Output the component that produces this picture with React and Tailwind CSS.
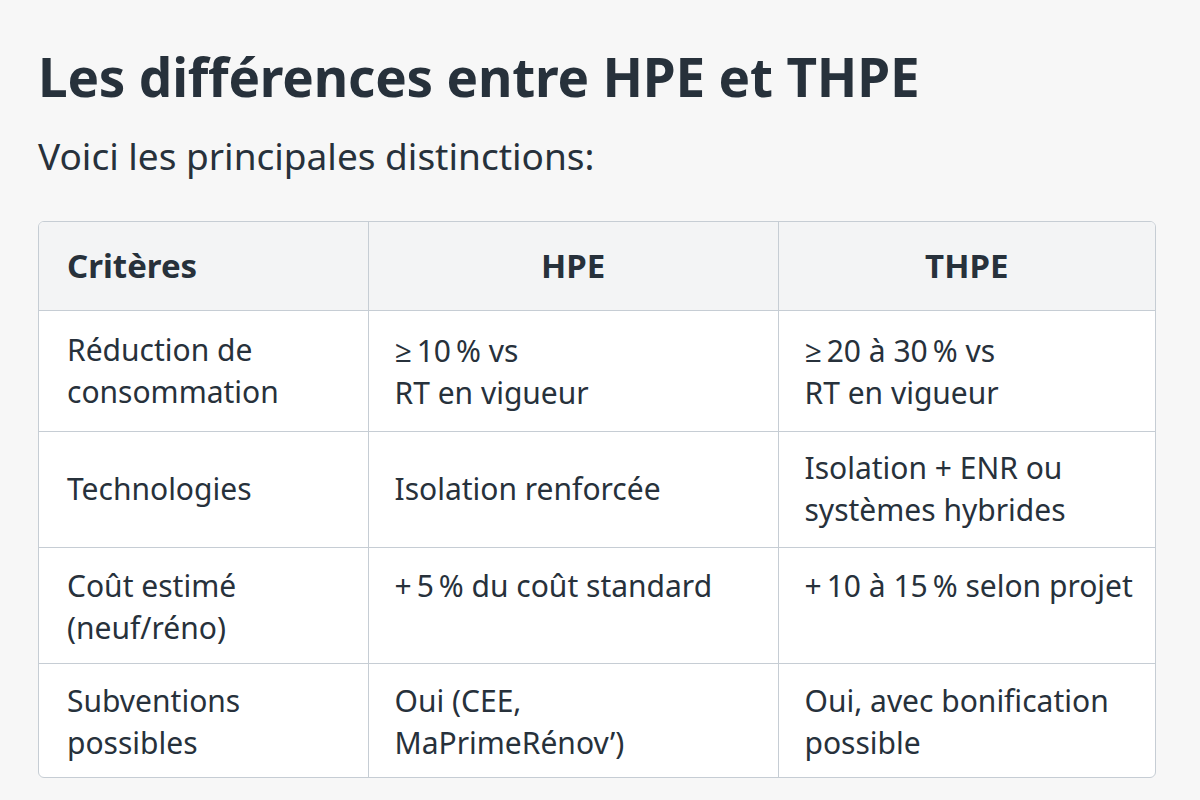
// Comparison table HPE vs THPE: title, short intro and a bordered 3-column table.
const ROWS = [
  {
    label: ['Réduction de', 'consommation'],
    hpe: ['≥\u202F10\u202F% vs', 'RT en vigueur'],
    thpe: ['≥\u202F20 à 30\u202F% vs', 'RT en vigueur'],
    h: 'h-[121px]',
    align: 'align-top pt-[19px]',
  },
  {
    label: ['Technologies'],
    hpe: ['Isolation renforcée'],
    thpe: ['Isolation + ENR ou', 'systèmes hybrides'],
    h: 'h-[116px]',
    align: 'align-middle',
  },
  {
    label: ['Coût estimé', '(neuf/réno)'],
    hpe: ['+\u202F5\u202F% du coût standard'],
    thpe: ['+\u202F10 à 15\u202F% selon projet'],
    h: 'h-[116px]',
    align: 'align-top pt-[17px]',
  },
  {
    label: ['Subventions', 'possibles'],
    hpe: ['Oui (CEE,', 'MaPrimeRénov’)'],
    thpe: ['Oui, avec bonification', 'possible'],
    h: 'h-[114px]',
    align: 'align-top pt-[16px]',
  },
];

function Lines({ lines }) {
  return lines.map((l, i) => <div key={i} className="whitespace-nowrap">{l}</div>);
}

export default function App() {
  return (
    <div
      className="w-[1200px] h-[800px] bg-[#f7f7f7] text-[#27313b] px-[38px] pt-[46px]"
      style={{ fontFamily: '"Noto Sans", "Open Sans", sans-serif' }}
    >
      <h1 className="text-[53px] leading-[62px] font-bold tracking-[-0.2px]">Les différences entre HPE et THPE</h1>
      <p className="mt-[26px] text-[37px] leading-[44px]">Voici les principales distinctions:</p>

      <div className="mt-[43px] w-[1118px] border border-[#c6cdd4] rounded-md overflow-hidden bg-white">
        <table className="w-full table-fixed border-collapse text-[30px] leading-[42px]">
          <colgroup>
            <col className="w-[329px]" />
            <col className="w-[410px]" />
            <col />
          </colgroup>
          <thead>
            <tr className="h-[88px] bg-[#f3f4f5] text-[33px]">
              <th className="text-left font-bold pl-[28px] border-r border-[#c6cdd4]">Critères</th>
              <th className="text-center font-bold border-r border-[#c6cdd4]">HPE</th>
              <th className="text-center font-bold">THPE</th>
            </tr>
          </thead>
          <tbody>
            {ROWS.map((r, i) => (
              <tr key={i} className={`${r.h} border-t border-[#c6cdd4]`}>
                <td className={`pl-[28px] pr-3 border-r border-[#c6cdd4] ${i === 0 ? 'align-middle' : r.align}`}>
                  <Lines lines={r.label} />
                </td>
                <td className={`pl-[26px] pr-3 border-r border-[#c6cdd4] ${r.align}`}>
                  <Lines lines={r.hpe} />
                </td>
                <td className={`pl-[26px] pr-2 ${r.align}`}>
                  <Lines lines={r.thpe} />
                </td>
              </tr>
            ))}
          </tbody>
        </table>
      </div>
    </div>
  );
}
